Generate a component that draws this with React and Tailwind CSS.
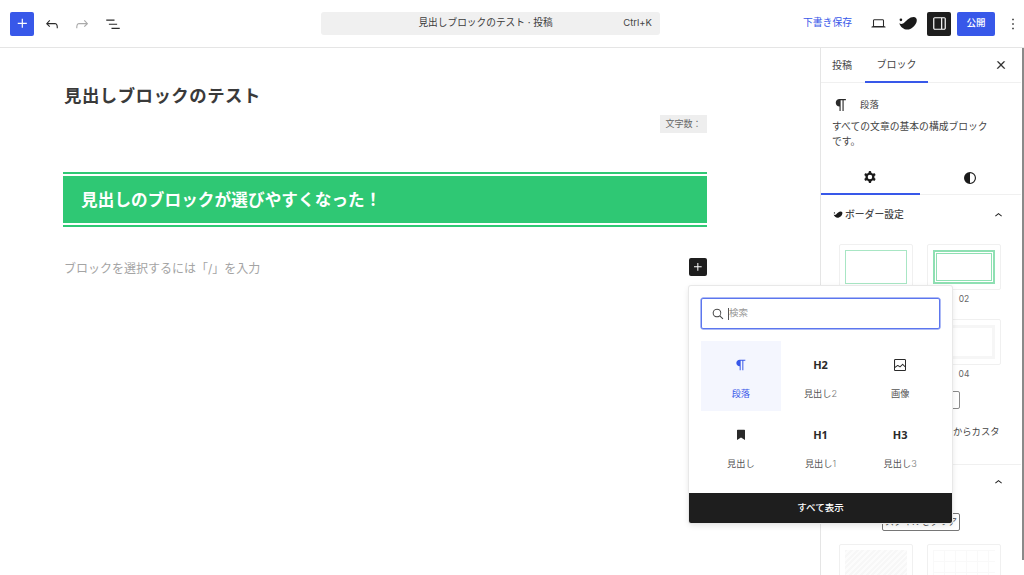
import React from "react";

const P = {
  plus: "M11 12.5V17.5H12.5V12.5H17.5V11H12.5V6H11V11H6V12.5H11Z",
  undo: "M18.3 11.7c-.6-.6-1.4-.9-2.3-.9H6.7l2.9-3.3-1.1-1-4.5 5L8.5 16l1-1-2.7-2.7H16c.5 0 .9.2 1.3.5 1 1 1 3.4 1 4.5v.3h1.5v-.2c0-1.5 0-4.3-1.5-5.7z",
  redo: "M15.6 6.5l-1.1 1 2.9 3.3H8c-.9 0-1.7.3-2.3.9-1.4 1.5-1.4 4.2-1.4 5.6v.2h1.5v-.3c0-1.1 0-3.5 1-4.5.3-.3.7-.5 1.3-.5h9.2L14.5 15l1.1 1.1 4.6-4.6-4.6-5z",
  list: "M3 6h11v1.5H3V6Zm3.5 5.5h11V13h-11v-1.5ZM21 17H10v1.5h11V17Z",
  para: "m9.99609 14v-.2251l.00391.0001v6.225h1.5v-14.5h2.5v14.5h1.5v-14.5h3v-1.5h-8.50391c-2.76142 0-5 2.23858-5 5 0 2.7614 2.23858 5 5 5z",
  close: "M13 11.8l6.1-6.3-1-1-6.1 6.2-6.1-6.2-1 1 6.1 6.3-6.5 6.7 1 1 6.5-6.6 6.5 6.6 1-1z",
  cog: "M10.289 4.836A1 1 0 0 1 11.275 4h1.306a1 1 0 0 1 .987.836l.244 1.466c.787.26 1.503.679 2.108 1.218l1.393-.522a1 1 0 0 1 1.216.437l.653 1.13a1 1 0 0 1-.23 1.273l-1.148.944a6.025 6.025 0 0 1 0 2.435l1.149.946a1 1 0 0 1 .23 1.272l-.653 1.13a1 1 0 0 1-1.216.437l-1.394-.522c-.605.54-1.32.958-2.108 1.218l-.244 1.466a1 1 0 0 1-.987.836h-1.306a1 1 0 0 1-.986-.836l-.244-1.466a5.995 5.995 0 0 1-2.108-1.218l-1.394.522a1 1 0 0 1-1.217-.436l-.653-1.131a1 1 0 0 1 .23-1.272l1.149-.946a6.026 6.026 0 0 1 0-2.435l-1.148-.944a1 1 0 0 1-.23-1.272l.653-1.131a1 1 0 0 1 1.217-.437l1.393.522a5.994 5.994 0 0 1 2.108-1.218l.244-1.466ZM14.929 12a3 3 0 1 1-6 0 3 3 0 0 1 6 0Z",
  half: "M12 4a8 8 0 1 0 0 16 8 8 0 0 0 0-16Zm0 1.5a6.5 6.5 0 0 1 0 13v-13Z",
  panel: "M18 4H6c-1.1 0-2 .9-2 2v12c0 1.1.9 2 2 2h12c1.1 0 2-.9 2-2V6c0-1.1-.9-2-2-2zm-4 14.5H6c-.3 0-.5-.2-.5-.5V6c0-.3.2-.5.5-.5h8v13zm4.5-.5c0 .3-.2.5-.5.5h-2.5v-13H18c.3 0 .5.2.5.5v12z",
  up: "M6.5 12.4L12 8l5.500 4.400-.9 1.200L12 10l-4.500 3.600-1-1.200z",
  dots: "M13 19h-2v-2h2v2zm0-6h-2v-2h2v2zm0-6h-2V5h2v2z",
  laptop: "M20.5 16h-.7V8c0-1.100-.9-2-2-2H6.200c-1.100 0-2 .9-2 2v8h-.7c-.8 0-1.500.7-1.500 1.500h20c0-.8-.7-1.500-1.500-1.500zM5.700 8c0-.3.2-.5.5-.5h11.600c.3 0 .5.2.5.5v7.600H5.700V8z",
  image: "M19 3H5c-1.1 0-2 .9-2 2v14c0 1.1.9 2 2 2h14c1.1 0 2-.9 2-2V5c0-1.1-.9-2-2-2zM5 4.5h14c.3 0 .5.2.5.5v8.4l-3-2.9c-.3-.3-.8-.3-1 0L11.9 14 9 12c-.3-.2-.6-.2-.8 0l-3.6 2.6V5c-.1-.3.1-.5.4-.5zm14 15H5c-.3 0-.5-.2-.5-.5v-2.4l4.1-3 3 1.9c.3.2.7.2.9-.1L16 12l3.5 3.4V19c0 .3-.2.5-.5.5z",
  bookmark: "M7 4h10a1 1 0 0 1 1 1v14.5l-6-3.6-6 3.6V5a1 1 0 0 1 1-1z",
  search: "M10.5 4a6.5 6.5 0 1 0 4 11.6l4.4 4.4 1.1-1.1-4.4-4.4A6.5 6.5 0 0 0 10.5 4Zm0 1.5a5 5 0 1 1 0 10 5 5 0 0 1 0-10Z",
  logo: "M1.500 11c2 1.500 4.500 1 6.500-1C10.500 7.500 14 3.500 18.500 3.500c3 0 4.500 2 4 5-.7 4.500-5 9-9.500 10-5 1-10-2.500-11.500-7.500ZM3.500 5.400a1.600 1.600 0 1 1 0 3.200 1.600 1.600 0 0 1 0-3.200Z",
};

function Icon({ d, className = "" }) {
  return (
    <svg viewBox="0 0 24 24" fill="currentColor" fillRule="evenodd" className={`shrink-0 ${className}`}>
      <path d={d} />
    </svg>
  );
}

function TopBar() {
  return (
    <header className="h-[48px] shrink-0 flex items-center border-b border-[#e5e5e5] pl-[10px]">
      <button className="w-[24px] h-[24px] rounded-[2px] bg-[#3858e9] text-white flex items-center justify-center">
        <Icon d={P.plus} className="w-[19px] h-[19px]" />
      </button>
      <Icon d={P.undo} className="w-[18px] h-[18px] ml-[9px] text-[#2a2a2a]" />
      <Icon d={P.redo} className="w-[18px] h-[18px] ml-[12px] text-[#aaaaaa]" />
      <Icon d={P.list} className="w-[18px] h-[18px] ml-[13px] text-[#2a2a2a]" />
      <div className="w-[339px] h-[23px] ml-[199px] shrink-0 rounded-[3px] bg-[#f0f0f0] flex items-center relative">
        <span className="flex-1 text-center text-[9.7px] text-[#3c3c3c] pr-[10px]">見出しブロックのテスト · 投稿</span>
        <span className="absolute right-[8px] text-[9.5px] text-[#444444]">Ctrl+K</span>
      </div>
      <span className="ml-[143px] w-[49px] shrink-0 whitespace-nowrap text-[9.8px] text-[#3858e9]">下書き保存</span>
      <Icon d={P.laptop} className="w-[17px] h-[17px] ml-[18px] text-[#2a2a2a]" />
      <Icon d={P.logo} className="w-[20px] h-[20px] ml-[11px] text-[#1a1a1a]" />
      <div className="w-[24px] h-[24px] ml-[9px] shrink-0 rounded-[2px] bg-[#1e1e1e] text-white flex items-center justify-center">
        <Icon d={P.panel} className="w-[19px] h-[19px]" />
      </div>
      <button className="w-[38px] h-[24px] ml-[6px] shrink-0 rounded-[2px] bg-[#3858e9] text-white text-[9.5px] font-medium">公開</button>
      <Icon d={P.dots} className="w-[18px] h-[18px] ml-[9px] text-[#2a2a2a]" />
    </header>
  );
}

const items = [
  { label: "段落", icon: P.para, active: true },
  { label: "見出し", num: "2", text: "H2" },
  { label: "画像", icon: P.image },
  { label: "見出し", icon: P.bookmark },
  { label: "見出し", num: "1", text: "H1" },
  { label: "見出し", num: "3", text: "H3" },
];

function InserterPopover() {
  return (
    <div className="absolute left-[689px] top-[286px] w-[263px] h-[237px] bg-white rounded-[2px] shadow-[0_0_0_1px_#e8e8e8,0_2px_6px_rgba(0,0,0,0.12)] flex flex-col z-10">
      <div className="flex-1 px-[12px] pt-[12px]">
        <div className="h-[31px] w-[239px] rounded-[2px] border border-[#5c76ee] flex items-center px-[8px] shadow-[0_0_0_0.5px_#5c76ee]">
          <Icon d={P.search} className="w-[16px] h-[16px] text-[#444444]" />
          <span className="ml-[2px] w-px h-[12px] bg-[#555555]" />
          <span className="text-[9.5px] text-[#999999]">検索</span>
        </div>
        <div className="grid grid-cols-3 w-[239px] mt-[12px]">
          {items.map((it) => (
            <div key={it.label + it.num + it.text} className={`h-[70px] flex flex-col items-center pt-[14px] ${it.active ? "bg-[#f4f6fe] text-[#3858e9]" : "text-[#2a2a2a]"}`}>
              <div className="h-[20px] flex items-center justify-center">
                {it.text ? (
                  <span className="text-[11px] font-bold" style={{ fontFamily: "'Noto Sans', sans-serif" }}>{it.text}</span>
                ) : (
                  <Icon d={it.icon} className="w-[16px] h-[16px]" />
                )}
              </div>
              <span className={`mt-[12px] text-[9.2px] ${it.active ? "" : "text-[#555555]"}`}>
                {it.label}
                {it.num && <span className="font-light text-[#777777]">{it.num}</span>}
              </span>
            </div>
          ))}
        </div>
      </div>
      <button className="h-[30px] rounded-b-[2px] bg-[#1e1e1e] text-white text-[9.5px] font-medium">すべて表示</button>
    </div>
  );
}

function Editor() {
  return (
    <main className="w-[820px] shrink-0 pl-[63px] pr-[113px]">
      <h1 className="mt-[37px] pl-[1px] text-[17.4px] leading-[22px] font-bold tracking-[0.5px] text-[#3a3a3a]">見出しブロックのテスト</h1>
      <div className="mt-[8px] flex justify-end">
        <span className="w-[47px] h-[18px] bg-[#eeeeee] flex items-center justify-center text-[9px] text-[#666666]">文字数：</span>
      </div>
      <div className="mt-[39px] h-[55px] border-y-2 border-[#2fc874] py-[2px]">
        <div className="h-full bg-[#2fc874] flex items-center pl-[18px] pt-[1px] text-[16.6px] font-bold tracking-[0.1px] text-white">
          見出しのブロックが選びやすくなった！
        </div>
      </div>
      <div className="mt-[31px] h-[18px] flex items-center justify-between">
        <span className="pl-[1px] pt-[3px] text-[12px] text-[#a4a4a4]">ブロックを選択するには「/」を入力</span>
        <button className="w-[18px] h-[18px] rounded-[2px] bg-[#1e1e1e] text-white flex items-center justify-center">
          <Icon d={P.plus} className="w-[16px] h-[16px]" />
        </button>
      </div>
    </main>
  );
}

function Thumb({ label, kind }) {
  return (
    <div className="flex flex-col items-center mb-[11px]">
      <div className="w-[74px] h-[46px] rounded-[2px] border border-[#f0f0f0] p-[5px]">
        {kind === "line" && <div className="h-full border-[1.5px] border-[#a8e6c4]" />}
        {kind === "double" && (
          <div className="h-full border-2 border-[#8fe0b3] p-px">
            <div className="h-full border border-[#8fe0b3]" />
          </div>
        )}
        {kind === "soft" && <div className="h-full border-[3px] border-[#f6f6f6]" />}
      </div>
      <span className="h-[18px] flex items-center text-[8.5px] text-[#666666]">{label}</span>
    </div>
  );
}

function Sidebar() {
  return (
    <aside className="w-[204px] shrink-0 border-l border-[#e5e5e5] relative overflow-hidden">
      <div className="absolute right-0 top-0 w-[2px] h-[512px] bg-[#8a8a8a]" />
      <div className="h-[35px] mr-[3px] flex items-center border-b border-[#f0f0f0] text-[10px] text-[#444444]">
        <span className="ml-[11px]">投稿</span>
        <div className="ml-[13px] w-[63px] h-[35px] flex items-center justify-center border-b-2 border-[#3858e9]">ブロック</div>
        <Icon d={P.close} className="w-[12px] h-[12px] ml-[67px] text-[#1e1e1e] stroke-current stroke-[1.2]" />
      </div>
      <div className="flex items-center h-[20px] mt-[12px] pl-[11px]">
        <Icon d={P.para} className="w-[18px] h-[18px] text-[#2a2a2a]" />
        <span className="ml-[10px] text-[9.4px] text-[#444444]">段落</span>
      </div>
      <p className="mt-[4px] px-[11px] w-[186px] text-[9.8px] leading-[15px] text-[#444444]">すべての文章の基本の構成ブロックです。</p>
      <div className="mt-[12px] -ml-px mr-[3px] h-[34px] flex border-b border-[#f0f0f0]">
        <div className="w-[100px] h-[34px] flex items-center justify-center border-b-2 border-[#3858e9]">
          <Icon d={P.cog} className="w-[18px] h-[18px] text-[#1a1a1a]" />
        </div>
        <div className="w-[100px] flex items-center justify-center">
          <Icon d={P.half} className="w-[18px] h-[18px] text-[#1a1a1a]" />
        </div>
      </div>
      <div className="mt-[12px] h-[16px] pl-[12px] pr-[18px] flex items-center justify-between">
        <div className="flex items-center">
          <Icon d={P.logo} className="w-[10px] h-[10px] text-[#1a1a1a]" />
          <span className="ml-[2px] text-[9.8px] font-medium text-[#444444]">ボーダー設定</span>
        </div>
        <Icon d={P.up} className="w-[15px] h-[15px] text-[#1e1e1e]" />
      </div>
      <div className="mt-[21px] pl-[18px] grid grid-cols-[74px_74px] gap-x-[14px]">
        <Thumb label="01" kind="line" />
        <Thumb label="02" kind="double" />
        <Thumb label="03" kind="soft" />
        <Thumb label="04" kind="soft" />
      </div>
      <div className="-mt-[3px] pl-[61px]">
        <div className="w-[78px] h-[18px] rounded-[2px] border border-[#8a8a8a]" />
      </div>
      <p className="mt-[16px] pl-[132px] whitespace-nowrap text-[9.3px] leading-[14px] text-[#444444]">からカスタ</p>
      <div className="mt-[25px] mr-[3px] border-t border-[#f0f0f0]" />
      <div className="mt-[10px] h-[16px] pr-[18px] flex justify-end">
        <Icon d={P.up} className="w-[15px] h-[15px] text-[#1e1e1e]" />
      </div>
      <div className="mt-[22px] pl-[61px]">
        <div className="w-[78px] h-[18px] rounded-[2px] border border-[#777777] flex items-center justify-center text-[9px] text-[#444444] whitespace-nowrap">スタイルをクリア</div>
      </div>
      <div className="mt-[13px] pl-[18px] flex gap-[14px]">
        <div className="w-[74px] h-[46px] rounded-[2px] border border-[#f0f0f0] p-[5px]">
          <div className="h-full bg-[repeating-linear-gradient(135deg,#f7f7f7_0,#f7f7f7_2px,#fcfcfc_2px,#fcfcfc_4px)]" />
        </div>
        <div className="w-[74px] h-[46px] rounded-[2px] border border-[#f0f0f0] p-[5px]">
          <div className="h-full bg-[linear-gradient(#f9f9f9_1px,transparent_1px),linear-gradient(90deg,#f9f9f9_1px,transparent_1px)] bg-[length:11px_11px]" />
        </div>
      </div>
    </aside>
  );
}

export default function App() {
  return (
    <div className="relative w-[1024px] h-[575px] overflow-hidden bg-white flex flex-col" style={{ fontFamily: "Inter, 'Noto Sans CJK JP', sans-serif" }}>
      <TopBar />
      <div className="flex-1 flex min-h-0">
        <Editor />
        <Sidebar />
      </div>
      <InserterPopover />
    </div>
  );
}
